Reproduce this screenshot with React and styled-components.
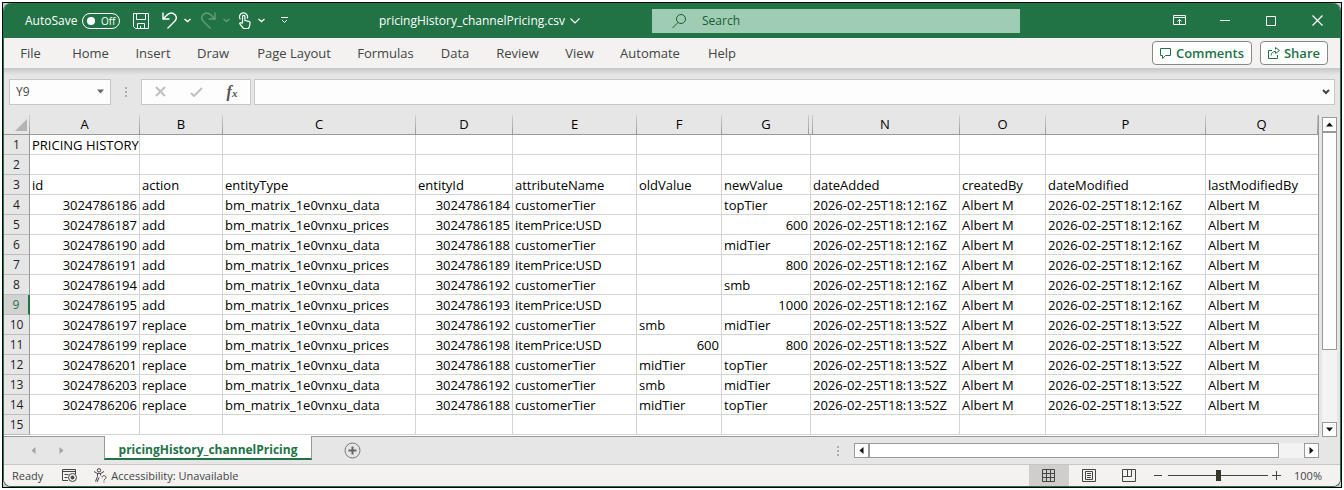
import React, { useState } from 'react'
import styled, { createGlobalStyle, css } from 'styled-components'

const GlobalStyle = createGlobalStyle`
  * {
    box-sizing: border-box;
  }
  body {
    margin: 0;
    background: #fff;
    font-family: "Open Sans", "Noto Sans", sans-serif;
    font-size: 12px;
    color: #444;
  }
  button, input {
    font: inherit;
    color: inherit;
  }
  button {
    padding: 0;
    border: 0;
    background: none;
  }
`

const Desktop = styled.div`
  padding: 2px;
`

const Frame = styled.div`
  border: 1px solid #000;
  background: #c8c8c8;
`

const Window = styled.div`
  display: flex;
  flex-direction: column;
  border: 1px solid #217346;
  border-top: 0;
  border-radius: 8px;
  overflow: hidden;
  background: #e6e6e6;
`

/* title bar */

const TitleBar = styled.header`
  display: grid;
  grid-template-columns: 375px 273px minmax(0, 368px) 1fr;
  align-items: center;
  height: 35px;
  background: #217346;
  color: #fff;
`

const QuickAccess = styled.div`
  display: flex;
  align-items: center;
  padding-left: 21px;
`

const AutoSave = styled.label`
  display: flex;
  align-items: center;
  gap: 5px;
  margin-right: 11px;
`

const Toggle = styled.span`
  display: flex;
  align-items: center;
  gap: 6px;
  width: 38px;
  height: 16px;
  padding: 0 4px;
  border: 1px solid #fff;
  border-radius: 8px;
  font-size: 10px;

  input {
    appearance: none;
    width: 8px;
    height: 8px;
    margin: 0;
    border-radius: 50%;
    background: #fff;
  }
`

const IconButton = styled.button`
  display: flex;
  align-items: center;
  justify-content: center;
  gap: 7px;
  flex: none;
  width: ${props => props.$width || 20}px;
  height: 22px;
  opacity: ${props => (props.disabled ? 0.3 : 1)};
`

const FileName = styled.button`
  display: flex;
  align-items: center;
  gap: 5px;
  white-space: nowrap;
`

const SearchBox = styled.label`
  display: flex;
  align-items: center;
  gap: 16px;
  height: 24px;
  padding-left: 20px;
  background: #9fcdb3;
  color: #185c37;

  input {
    flex: 1;
    min-width: 0;
    border: 0;
    outline: 0;
    padding: 0;
    background: none;
  }
  input::placeholder {
    color: #185c37;
    opacity: 1;
  }
`

const WindowButtons = styled.div`
  display: flex;
  justify-content: flex-end;
`

/* ribbon */

const Ribbon = styled.nav`
  display: flex;
  align-items: center;
  height: 30px;
  padding: 0 12px 0 2px;
  background: #f3f2f1;
`

const RibbonTab = styled.button`
  width: ${props => props.$width}px;
  font-size: 13px;
  line-height: 30px;
  text-align: center;
  white-space: nowrap;
`

const RibbonActions = styled.div`
  display: flex;
  gap: 8px;
  margin-left: auto;
`

const ActionButton = styled.button`
  display: flex;
  align-items: center;
  justify-content: center;
  gap: 4px;
  width: ${props => props.$width}px;
  height: 24px;
  border: 1px solid #8a8886;
  border-radius: 4px;
  background: #fff;
  color: #217346;
  font-size: 13px;
  font-weight: 600;
`

/* formula bar */

const FormulaBar = styled.div`
  display: flex;
  align-items: center;
  height: 47px;
  padding: 0 5px;
  background: linear-gradient(#c6c6c6, #e6e6e6 7px);
`

const boxed = css`
  height: 26px;
  border: 1px solid #c6c6c6;
  background: #fdfdfd;
`

const NameBox = styled.label`
  ${boxed}
  display: flex;
  align-items: center;
  width: 102px;
  padding: 0 6px;

  input {
    flex: 1;
    min-width: 0;
    padding: 0;
    border: 0;
    background: none;
  }
`

const Grip = styled.span`
  width: 2px;
  height: 10px;
  margin: ${props => props.$margin};
  background: repeating-linear-gradient(#b0b0b0 0 2px, transparent 2px 4px);
`

const FormulaButtons = styled.div`
  ${boxed}
  display: flex;
  align-items: center;
  justify-content: space-around;
  width: 110px;
`

const FxLabel = styled.span`
  color: #555;
  font-family: "Liberation Serif", serif;
  font-size: 16px;
  font-style: italic;
  font-weight: 700;
  line-height: 16px;

  sub {
    font-size: 11px;
    line-height: 1px;
    vertical-align: baseline;
  }
`

const FormulaInput = styled.label`
  ${boxed}
  display: flex;
  flex: 1;
  align-items: center;
  margin-left: 3px;
  padding: 0 4px;

  input {
    flex: 1;
    border: 0;
    background: none;
  }
`

/* sheet */

const SheetArea = styled.div`
  display: flex;
  gap: 3px;
  padding-right: 3px;
`

const GridPane = styled.div`
  flex: 1;
  min-width: 0;
  overflow: hidden;
  padding-bottom: 1px;
  border-right: 1px solid #999;
  border-bottom: 1px solid #999;
  background: linear-gradient(#e6e6e6 19px, #fff 19px);
`

const Grid = styled.table`
  width: 100%;
  table-layout: fixed;
  border-collapse: separate;
  border-spacing: 0;
  font-size: 13px;
  line-height: 18px;
  color: #000;
`

const headLine = 'linear-gradient(#cfcfcf, #999)'

const ColumnHead = styled.th`
  height: 20px;
  padding: 0 1px 1px 0;
  border-bottom: 1px solid #999;
  background-color: #e6e6e6;
  background-image: ${headLine}, ${headLine};
  background-repeat: no-repeat;
  background-size: 1px 19px, ${props => (props.$afterHidden ? '1px 19px' : '0 0')};
  background-position: right ${props => (props.$beforeHidden ? 2 : 0)}px top 0, left 1px top 0;
  font-weight: 400;
`

const Corner = styled(ColumnHead)`
  vertical-align: bottom;

  svg {
    display: block;
    margin: 0 2px 2px auto;
  }
`

const RowHead = styled.th`
  height: 20px;
  padding: 1px 0 0;
  border-right: ${props => (props.$active ? '2px solid #217346' : '1px solid #999')};
  border-bottom: 1px solid #bdbdbd;
  background: ${props => (props.$active ? '#d2d2d2' : '#e6e6e6')};
  color: ${props => (props.$active ? '#217346' : '#222')};
  font-size: 12px;
  font-weight: 400;
`

const Cell = styled.td`
  height: 20px;
  padding: 1px 2px 0;
  border-right: 1px solid #d4d4d4;
  border-bottom: 1px solid #d4d4d4;
  text-align: ${props => (props.$number ? 'right' : 'left')};
  white-space: nowrap;

  &:last-child {
    border-right: 0;
  }
`

const ScrollColumn = styled.div`
  display: flex;
  flex-direction: column;
  width: 15px;
  margin-top: 2px;
  background: #f3f3f3;
`

const ScrollRow = styled.div`
  display: flex;
  width: 465px;
  height: 15px;
  background: #f3f3f3;
`

const ScrollArrow = styled.button`
  display: flex;
  align-items: center;
  justify-content: center;
  flex: none;
  width: 15px;
  height: 15px;
  border: 1px solid #999;
  background: #fff;
`

const Thumb = styled.div`
  flex: 0 0 ${props => props.$size};
  margin-${props => props.$end}: auto;
  border: 1px solid #999;
  background: #fff;
`

/* sheet tabs and status bar */

const SheetBar = styled.div`
  display: flex;
  align-items: center;
  height: 27px;
  padding-right: 21px;
`

const SheetNav = styled.div`
  display: flex;
  gap: 8px;
  width: 100px;
  padding-left: 19px;
`

const SheetTab = styled.button`
  align-self: flex-start;
  width: 208px;
  height: 24px;
  margin-top: -1px;
  border: 1px solid #999;
  border-top: 0;
  border-bottom: 2px solid #217346;
  background: #fff;
  color: #217346;
  font-weight: 700;
  line-height: 28px;
`

const AddSheet = styled.button`
  display: flex;
  margin-left: 32px;
`

const StatusBar = styled.footer`
  display: flex;
  align-items: center;
  height: 22px;
  padding-right: 18px;
  border-top: 1px solid #c6c6c6;
  background: #f3f2f1;
  font-size: 11px;
`

const StatusItem = styled.span`
  display: flex;
  align-items: center;
  gap: 3px;
  margin-left: ${props => props.$gap}px;
`

const ViewSwitch = styled.div`
  display: flex;
  margin-left: auto;
  margin-right: 3px;
`

const ViewButton = styled.button`
  display: flex;
  align-items: center;
  justify-content: center;
  width: 40px;
  height: 21px;
  background: ${props => (props.$active ? '#d0cecc' : 'none')};
`

const ZoomSlider = styled.input`
  appearance: none;
  width: 100px;
  height: 13px;
  margin: 0 4px;
  background: linear-gradient(#444, #444) center / 100% 1px no-repeat;

  &::-webkit-slider-thumb {
    appearance: none;
    width: 5px;
    height: 11px;
    background: #33372a;
  }
`

const ribbonTabs = [
  { name: 'File', width: 49 },
  { name: 'Home', width: 71 },
  { name: 'Insert', width: 54 },
  { name: 'Draw', width: 66 },
  { name: 'Page Layout', width: 96 },
  { name: 'Formulas', width: 87 },
  { name: 'Data', width: 52 },
  { name: 'Review', width: 73 },
  { name: 'View', width: 51 },
  { name: 'Automate', width: 90 },
  { name: 'Help', width: 54 }
]

const columns = [
  { letter: 'A', width: 110 },
  { letter: 'B', width: 83 },
  { letter: 'C', width: 193 },
  { letter: 'D', width: 97 },
  { letter: 'E', width: 124 },
  { letter: 'F', width: 85 },
  { letter: 'G', width: 89, beforeHidden: true },
  { letter: 'N', width: 149, afterHidden: true },
  { letter: 'O', width: 86 },
  { letter: 'P', width: 160 },
  { letter: 'Q' }
]

const day1 = '2026-02-25T18:12:16Z'
const day2 = '2026-02-25T18:13:52Z'
const user = 'Albert M'

const rows = [
  ['PRICING HISTORY'],
  [],
  ['id', 'action', 'entityType', 'entityId', 'attributeName', 'oldValue', 'newValue', 'dateAdded', 'createdBy', 'dateModified', 'lastModifiedBy'],
  [3024786186, 'add', 'bm_matrix_1e0vnxu_data', 3024786184, 'customerTier', '', 'topTier', day1, user, day1, user],
  [3024786187, 'add', 'bm_matrix_1e0vnxu_prices', 3024786185, 'itemPrice:USD', '', 600, day1, user, day1, user],
  [3024786190, 'add', 'bm_matrix_1e0vnxu_data', 3024786188, 'customerTier', '', 'midTier', day1, user, day1, user],
  [3024786191, 'add', 'bm_matrix_1e0vnxu_prices', 3024786189, 'itemPrice:USD', '', 800, day1, user, day1, user],
  [3024786194, 'add', 'bm_matrix_1e0vnxu_data', 3024786192, 'customerTier', '', 'smb', day1, user, day1, user],
  [3024786195, 'add', 'bm_matrix_1e0vnxu_prices', 3024786193, 'itemPrice:USD', '', 1000, day1, user, day1, user],
  [3024786197, 'replace', 'bm_matrix_1e0vnxu_data', 3024786192, 'customerTier', 'smb', 'midTier', day2, user, day2, user],
  [3024786199, 'replace', 'bm_matrix_1e0vnxu_prices', 3024786198, 'itemPrice:USD', 600, 800, day2, user, day2, user],
  [3024786201, 'replace', 'bm_matrix_1e0vnxu_data', 3024786188, 'customerTier', 'midTier', 'topTier', day2, user, day2, user],
  [3024786203, 'replace', 'bm_matrix_1e0vnxu_data', 3024786192, 'customerTier', 'smb', 'midTier', day2, user, day2, user],
  [3024786206, 'replace', 'bm_matrix_1e0vnxu_data', 3024786188, 'customerTier', 'midTier', 'topTier', day2, user, day2, user],
  []
]

function Icon({ w = 16, h = w, sw = 1, children }) {
  return (
    <svg width={w} height={h} viewBox={`0 0 ${w} ${h}`} fill="none" stroke="currentColor" strokeWidth={sw} aria-hidden="true">
      {children}
    </svg>
  )
}

const Chevron = () => <Icon w={7} h={5} sw={1.4}><path d="M.5 1l3 2.5 3-2.5" /></Icon>

const arrows = {
  up: 'M0 5.5L3.5 1.5L7 5.5z',
  down: 'M0 1.5L3.5 5.5L7 1.5z',
  left: 'M5.5 0L1.5 3.5L5.5 7z',
  right: 'M1.5 0L5.5 3.5L1.5 7z'
}

const Arrow = ({ dir, color = '#111' }) => (
  <svg width="7" height="7" viewBox="0 0 7 7" aria-hidden="true"><path fill={color} d={arrows[dir]} /></svg>
)

function Title() {
  const [autoSave, setAutoSave] = useState(false)
  return (
    <TitleBar>
      <QuickAccess>
        <AutoSave>
          AutoSave
          <Toggle>
            <input type="checkbox" checked={autoSave} onChange={e => setAutoSave(e.target.checked)} />
            {autoSave ? 'On' : 'Off'}
          </Toggle>
        </AutoSave>
        <IconButton aria-label="Save">
          <Icon w={16}><path d="M.5.5h15v15H2.5l-2-2zM3.5.5v6h9v-6M4.5 15.5v-5h7v5M7.5 15v-2" /></Icon>
        </IconButton>
        <IconButton $width={50} aria-label="Undo">
          <Icon w={15} h={17} sw={1.4}><path d="M1 .5v6.5h6.5M1.3 6.7L5 3C8 .3 11 .6 13 2.7c1.8 2.2 1.5 4.8-.5 6.8L5.5 16.5" /></Icon>
          <Chevron />
        </IconButton>
        <IconButton $width={29} disabled aria-label="Redo">
          <Icon w={15} h={17} sw={1.4}><path d="M14 .5v6.5H7.5M13.7 6.7L10 3C7 .3 4 .6 2 2.7.2 4.9.5 7.5 2.5 9.5l7 7" /></Icon>
          <Chevron />
        </IconButton>
        <IconButton $width={43} aria-label="Touch mode">
          <Icon w={13} h={17} sw={1.2}><path d="M4.5 11V4.500a1.200 1.200 0 0 1 2.400 0v4l4 .9c.9.200 1.300.8 1.200 1.600l-.6 3.200-1 2.300H5.500L2 12.200c-.8-1 .4-2 1.300-1.300l1.200 1M2.300 7.300A4 4 0 1 1 9.200 6.500" /></Icon>
          <Chevron />
        </IconButton>
        <IconButton $width={23} aria-label="Customize toolbar">
          <Icon w={7} h={7}><path d="M0 .5h7M1 3l2.500 2.500L6 3" /></Icon>
        </IconButton>
      </QuickAccess>
      <FileName>
        pricingHistory_channelPricing.csv
        <Icon w={10} h={6} sw={1.2}><path d="M.5.5l4.500 4.500L9.500.5" /></Icon>
      </FileName>
      <SearchBox>
        <Icon w={14}><circle cx="9" cy="5" r="4.5" /><path d="M6 8.500L.5 14" /></Icon>
        <input type="search" placeholder="Search" aria-label="Search" />
      </SearchBox>
      <WindowButtons>
        <IconButton $width={46} aria-label="Ribbon display options">
          <Icon w={13} h={11}><path d="M.5.5h12v9H.5zM.5 2.500h12M6.500 9V4.500M4.500 6.500l2-2 2 2" /></Icon>
        </IconButton>
        <IconButton $width={46} aria-label="Minimize"><Icon w={10}><path d="M0 4.500h10" /></Icon></IconButton>
        <IconButton $width={46} aria-label="Maximize"><Icon w={10}><path d="M.5.5h9v9h-9z" /></Icon></IconButton>
        <IconButton $width={46} aria-label="Close"><Icon w={11} sw={1.2}><path d="M.5.5l10 10M10.500.5l-10 10" /></Icon></IconButton>
      </WindowButtons>
    </TitleBar>
  )
}

function Sheet() {
  return (
    <SheetArea>
      <GridPane>
        <Grid>
          <colgroup>
            <col style={{ width: 26 }} />
            {columns.map(col => <col key={col.letter} style={{ width: col.width }} />)}
          </colgroup>
          <thead>
            <tr>
              <Corner aria-label="Select all">
                <svg width="12" height="12" aria-hidden="true"><path d="M12 0v12H0z" fill="#b4b4b4" /></svg>
              </Corner>
              {columns.map(col => (
                <ColumnHead key={col.letter} scope="col" $beforeHidden={col.beforeHidden} $afterHidden={col.afterHidden}>
                  {col.letter}
                </ColumnHead>
              ))}
            </tr>
          </thead>
          <tbody>
            {rows.map((row, index) => (
              <tr key={index}>
                <RowHead scope="row" $active={index === 8}>{index + 1}</RowHead>
                {columns.map((col, i) => (
                  <Cell key={col.letter} $number={typeof row[i] === 'number'}>{row[i]}</Cell>
                ))}
              </tr>
            ))}
          </tbody>
        </Grid>
      </GridPane>
      <ScrollColumn>
        <ScrollArrow aria-label="Scroll up"><Arrow dir="up" /></ScrollArrow>
        <Thumb $size="218px" $end="bottom" />
        <ScrollArrow aria-label="Scroll down"><Arrow dir="down" /></ScrollArrow>
      </ScrollColumn>
    </SheetArea>
  )
}

function Status() {
  const [zoom, setZoom] = useState(100)
  return (
    <StatusBar>
      <StatusItem $gap={8}>Ready</StatusItem>
      <StatusItem $gap={19}>
        <Icon w={15} h={13}><path d="M6 11.500H.5V.5h13V5M.5 2.500h13M2.500 5.500h4M2.500 8.500h3" /><circle cx="10.5" cy="8.5" r="4" /><circle cx="10.5" cy="8.5" r="1.5" fill="currentColor" /></Icon>
      </StatusItem>
      <StatusItem $gap={16}>
        <Icon w={15} h={15}><circle cx="6" cy="2.3" r="1.7" /><path d="M1 3.500l3.500 2v3L2.500 13.500M11 3.500l-3.500 2v2M4.500 5.500h3M6 9.500l-2 4.500M9 9.500c0-2.500 4-2.500 4 0 0 1.500-2 1.500-2 3M11 13.500v1" /></Icon>
        Accessibility: Unavailable
      </StatusItem>
      <ViewSwitch>
        <ViewButton $active aria-label="Normal view">
          <Icon w={14} h={13}><path d="M.5.5h12v12H.5zM4.500.5v12M8.500.5v12M.5 4.500h12M.5 8.500h12" /></Icon>
        </ViewButton>
        <ViewButton aria-label="Page layout view">
          <Icon w={14} h={13}><path d="M.5.5h13v12H.5zM3.500 2.500h7v8h-7zM5 4.500h4M5 6.500h4M5 8.500h4" /></Icon>
        </ViewButton>
        <ViewButton aria-label="Page break preview">
          <Icon w={14} h={13}><path d="M.5.5h13v12H.5zM.5 7.500h9v-7M5.500.5v7" /></Icon>
        </ViewButton>
      </ViewSwitch>
      <IconButton $width={12} aria-label="Zoom out" onClick={() => setZoom(zoom - 10)}>
        <Icon w={8}><path d="M0 3.500h8" /></Icon>
      </IconButton>
      <ZoomSlider type="range" min="10" max="190" value={zoom} aria-label="Zoom" onChange={e => setZoom(Number(e.target.value))} />
      <IconButton $width={9} aria-label="Zoom in" onClick={() => setZoom(zoom + 10)}>
        <Icon w={9}><path d="M0 4.500h9M4.500 0v9" /></Icon>
      </IconButton>
      <StatusItem $gap={13}>{zoom}%</StatusItem>
    </StatusBar>
  )
}

function App() {
  return (
    <Desktop>
      <GlobalStyle />
      <Frame>
        <Window>
          <Title />
          <Ribbon>
            {ribbonTabs.map(tab => <RibbonTab key={tab.name} $width={tab.width}>{tab.name}</RibbonTab>)}
            <RibbonActions>
              <ActionButton $width={100}>
                <Icon w={12} h={11}><path d="M.5.5h10v7h-5l-3 3v-3h-2z" /></Icon>
                Comments
              </ActionButton>
              <ActionButton $width={68}>
                <Icon w={12} h={12}><path d="M4 3.500H.5v8h9V8M3 8.500c.5-3 2-4 4.500-4v2l4-3-4-3v2" /></Icon>
                Share
              </ActionButton>
            </RibbonActions>
          </Ribbon>
          <FormulaBar>
            <NameBox>
              <input defaultValue="Y9" aria-label="Name box" />
              <Arrow dir="down" color="#666" />
            </NameBox>
            <Grip $margin="0 14px" />
            <FormulaButtons>
              <IconButton aria-label="Cancel"><Icon w={11} sw={2}><path d="M1 1l9 9M10 1l-9 9" stroke="#c0c0c0" /></Icon></IconButton>
              <IconButton aria-label="Enter"><Icon w={13} h={10} sw={2}><path d="M1 6l3 3 8-8" stroke="#c0c0c0" /></Icon></IconButton>
              <IconButton aria-label="Insert function"><FxLabel>f<sub>x</sub></FxLabel></IconButton>
            </FormulaButtons>
            <FormulaInput>
              <input aria-label="Formula" />
              <Icon w={8} h={6} sw={2}><path d="M1 1l3 3 3-3" /></Icon>
            </FormulaInput>
          </FormulaBar>
          <Sheet />
          <SheetBar>
            <SheetNav>
              <IconButton disabled aria-label="Previous sheet"><Arrow dir="left" /></IconButton>
              <IconButton disabled aria-label="Next sheet"><Arrow dir="right" /></IconButton>
            </SheetNav>
            <SheetTab>pricingHistory_channelPricing</SheetTab>
            <AddSheet aria-label="New sheet">
              <Icon w={17}><circle cx="8.5" cy="8.5" r="7.5" stroke="#777" /><path d="M4.500 8.500h8M8.500 4.500v8" stroke="#666" strokeWidth="2" /></Icon>
            </AddSheet>
            <Grip $margin="0 15px 0 auto" />
            <ScrollRow>
              <ScrollArrow aria-label="Scroll left"><Arrow dir="left" /></ScrollArrow>
              <Thumb $size="410px" $end="right" />
              <ScrollArrow aria-label="Scroll right"><Arrow dir="right" /></ScrollArrow>
            </ScrollRow>
          </SheetBar>
          <Status />
        </Window>
      </Frame>
    </Desktop>
  )
}

export default App
